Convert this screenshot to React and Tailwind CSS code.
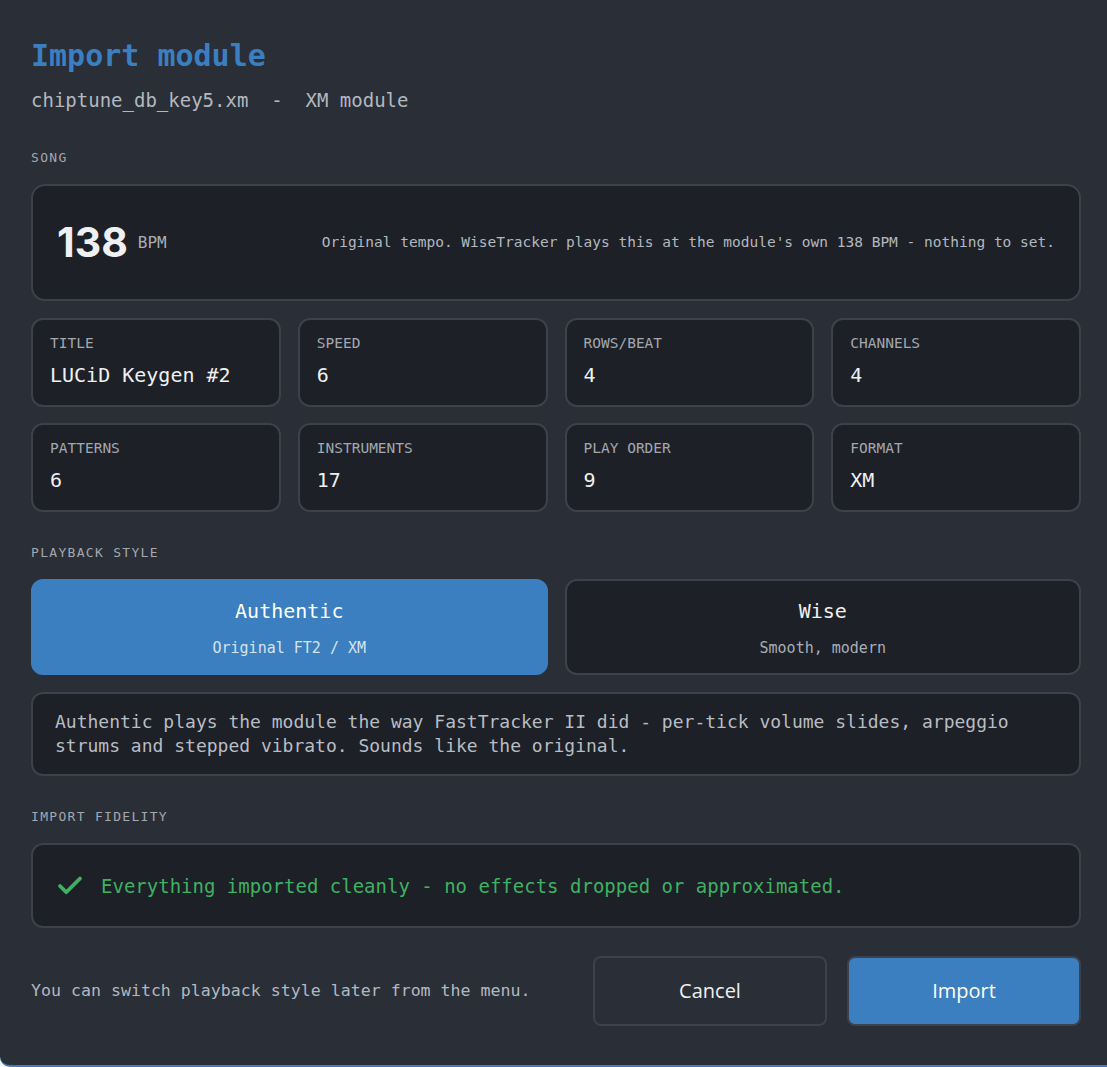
import { useState } from 'react'
import { Check } from 'lucide-react'

const MONO = 'font-["DejaVu_Sans_Mono","Liberation_Mono",monospace]'

const STATS = [
  { label: 'Title', value: 'LUCiD Keygen #2' },
  { label: 'Speed', value: '6' },
  { label: 'Rows/Beat', value: '4' },
  { label: 'Channels', value: '4' },
  { label: 'Patterns', value: '6' },
  { label: 'Instruments', value: '17' },
  { label: 'Play Order', value: '9' },
  { label: 'Format', value: 'XM' },
]

const STYLES = [
  {
    value: 'authentic',
    label: 'Authentic',
    hint: 'Original FT2 / XM',
    about:
      'Authentic plays the module the way FastTracker II did - per-tick volume slides, arpeggio strums and stepped vibrato. Sounds like the original.',
  },
  {
    value: 'wise',
    label: 'Wise',
    hint: 'Smooth, modern',
    about:
      'Wise smooths the module out - interpolated volume slides, gentle arpeggios and continuous vibrato. Sounds cleaner and more modern.',
  },
]

function SectionLabel({ children, className = '' }) {
  return (
    <p className={`${MONO} text-[13px] leading-[18px] tracking-[1.3px] uppercase text-[#a3a8b0] ${className}`}>
      {children}
    </p>
  )
}

export default function App() {
  const [style, setStyle] = useState('authentic')
  const current = STYLES.find(s => s.value === style)

  return (
    <div className={`${MONO} min-h-[1067px] bg-[#292e37] border-b-2 border-[#3a7fc1] rounded-bl-[10px] pl-[31px] pr-[26px] pt-[38px] pb-[38px]`}>
      <h1 className="text-[30px] leading-[36px] font-bold text-[#3b7fc1]">Import module</h1>
      <p className="mt-[13px] text-[19px] leading-[26px] text-[#b3b8bf] whitespace-pre">
        chiptune_db_key5.xm  -  XM module
      </p>

      <SectionLabel className="mt-[36px]">Song</SectionLabel>
      <div className="mt-[17px] h-[117px] rounded-[14px] border-2 border-[#3c414b] bg-[#1d2027] flex items-center justify-between px-[24px]">
        <div className="flex items-center gap-[10px]">
          <span className='font-["Inter",sans-serif] text-[41px] font-bold text-[#eef0f2] leading-none'>138</span>
          <span className="text-[16px] text-[#a9aeb5]">BPM</span>
        </div>
        <p className="text-[14.5px] text-[#b3b8bf]">
          Original tempo. WiseTracker plays this at the module's own 138 BPM - nothing to set.
        </p>
      </div>

      <div className="mt-[17px] grid grid-cols-4 gap-x-[17px] gap-y-[16px]">
        {STATS.map(s => (
          <div
            key={s.label}
            className="h-[89px] rounded-[12px] border-2 border-[#3c414b] bg-[#1d2027] px-[17px] pt-[13px]"
          >
            <p className="text-[14.5px] leading-[20px] uppercase text-[#a3a8b0]">{s.label}</p>
            <p className="mt-[9px] text-[20px] leading-[26px] text-[#eef0f2]">{s.value}</p>
          </div>
        ))}
      </div>

      <SectionLabel className="mt-[32px]">Playback style</SectionLabel>
      <div className="mt-[17px] grid grid-cols-2 gap-[17px]">
        {STYLES.map(s => (
          <button
            key={s.value}
            type="button"
            onClick={() => setStyle(s.value)}
            className={`h-[96px] rounded-[12px] border-2 flex flex-col items-center justify-center ${
              style === s.value
                ? 'bg-[#3b7fc1] border-[#3b7fc1] text-white'
                : 'bg-[#1d2027] border-[#3c414b] text-[#eef0f2]'
            }`}
          >
            <span className="mt-[2px] text-[20px] leading-[26px]">{s.label}</span>
            <span
              className={`mt-[14px] text-[15px] leading-[20px] ${
                style === s.value ? 'text-[#d6e2ef]' : 'text-[#a9aeb5]'
              }`}
            >
              {s.hint}
            </span>
          </button>
        ))}
      </div>
      <div className="mt-[17px] h-[84px] rounded-[12px] border-2 border-[#3c414b] bg-[#1d2027] px-[22px] flex items-center">
        <p className="text-[18px] leading-[24px] text-[#b8bdc4]">{current.about}</p>
      </div>

      <SectionLabel className="mt-[32px]">Import fidelity</SectionLabel>
      <div className="mt-[17px] h-[85px] rounded-[12px] border-2 border-[#3c414b] bg-[#1d2027] px-[22px] flex items-center gap-[16px]">
        <Check size={30} strokeWidth={3} className="text-[#3fb163] shrink-0" />
        <p className="text-[19px] leading-[26px] text-[#3fb163]">
          Everything imported cleanly - no effects dropped or approximated.
        </p>
      </div>

      <div className="mt-[28px] flex items-center">
        <p className="flex-1 text-[16.6px] text-[#b3b8bf]">You can switch playback style later from the menu.</p>
        <div className='flex gap-[20px] font-["Open_Sans","Noto_Sans",sans-serif] text-[20px]'>
          <button
            type="button"
            className="w-[234px] h-[70px] rounded-[8px] border-2 border-[#3c414b] bg-[#292e37] text-[#eef0f2]"
          >
            Cancel
          </button>
          <button
            type="button"
            className="w-[234px] h-[70px] rounded-[8px] border-2 border-[#3c414b] bg-[#3b7fc1] text-white"
          >
            Import
          </button>
        </div>
      </div>
    </div>
  )
}
